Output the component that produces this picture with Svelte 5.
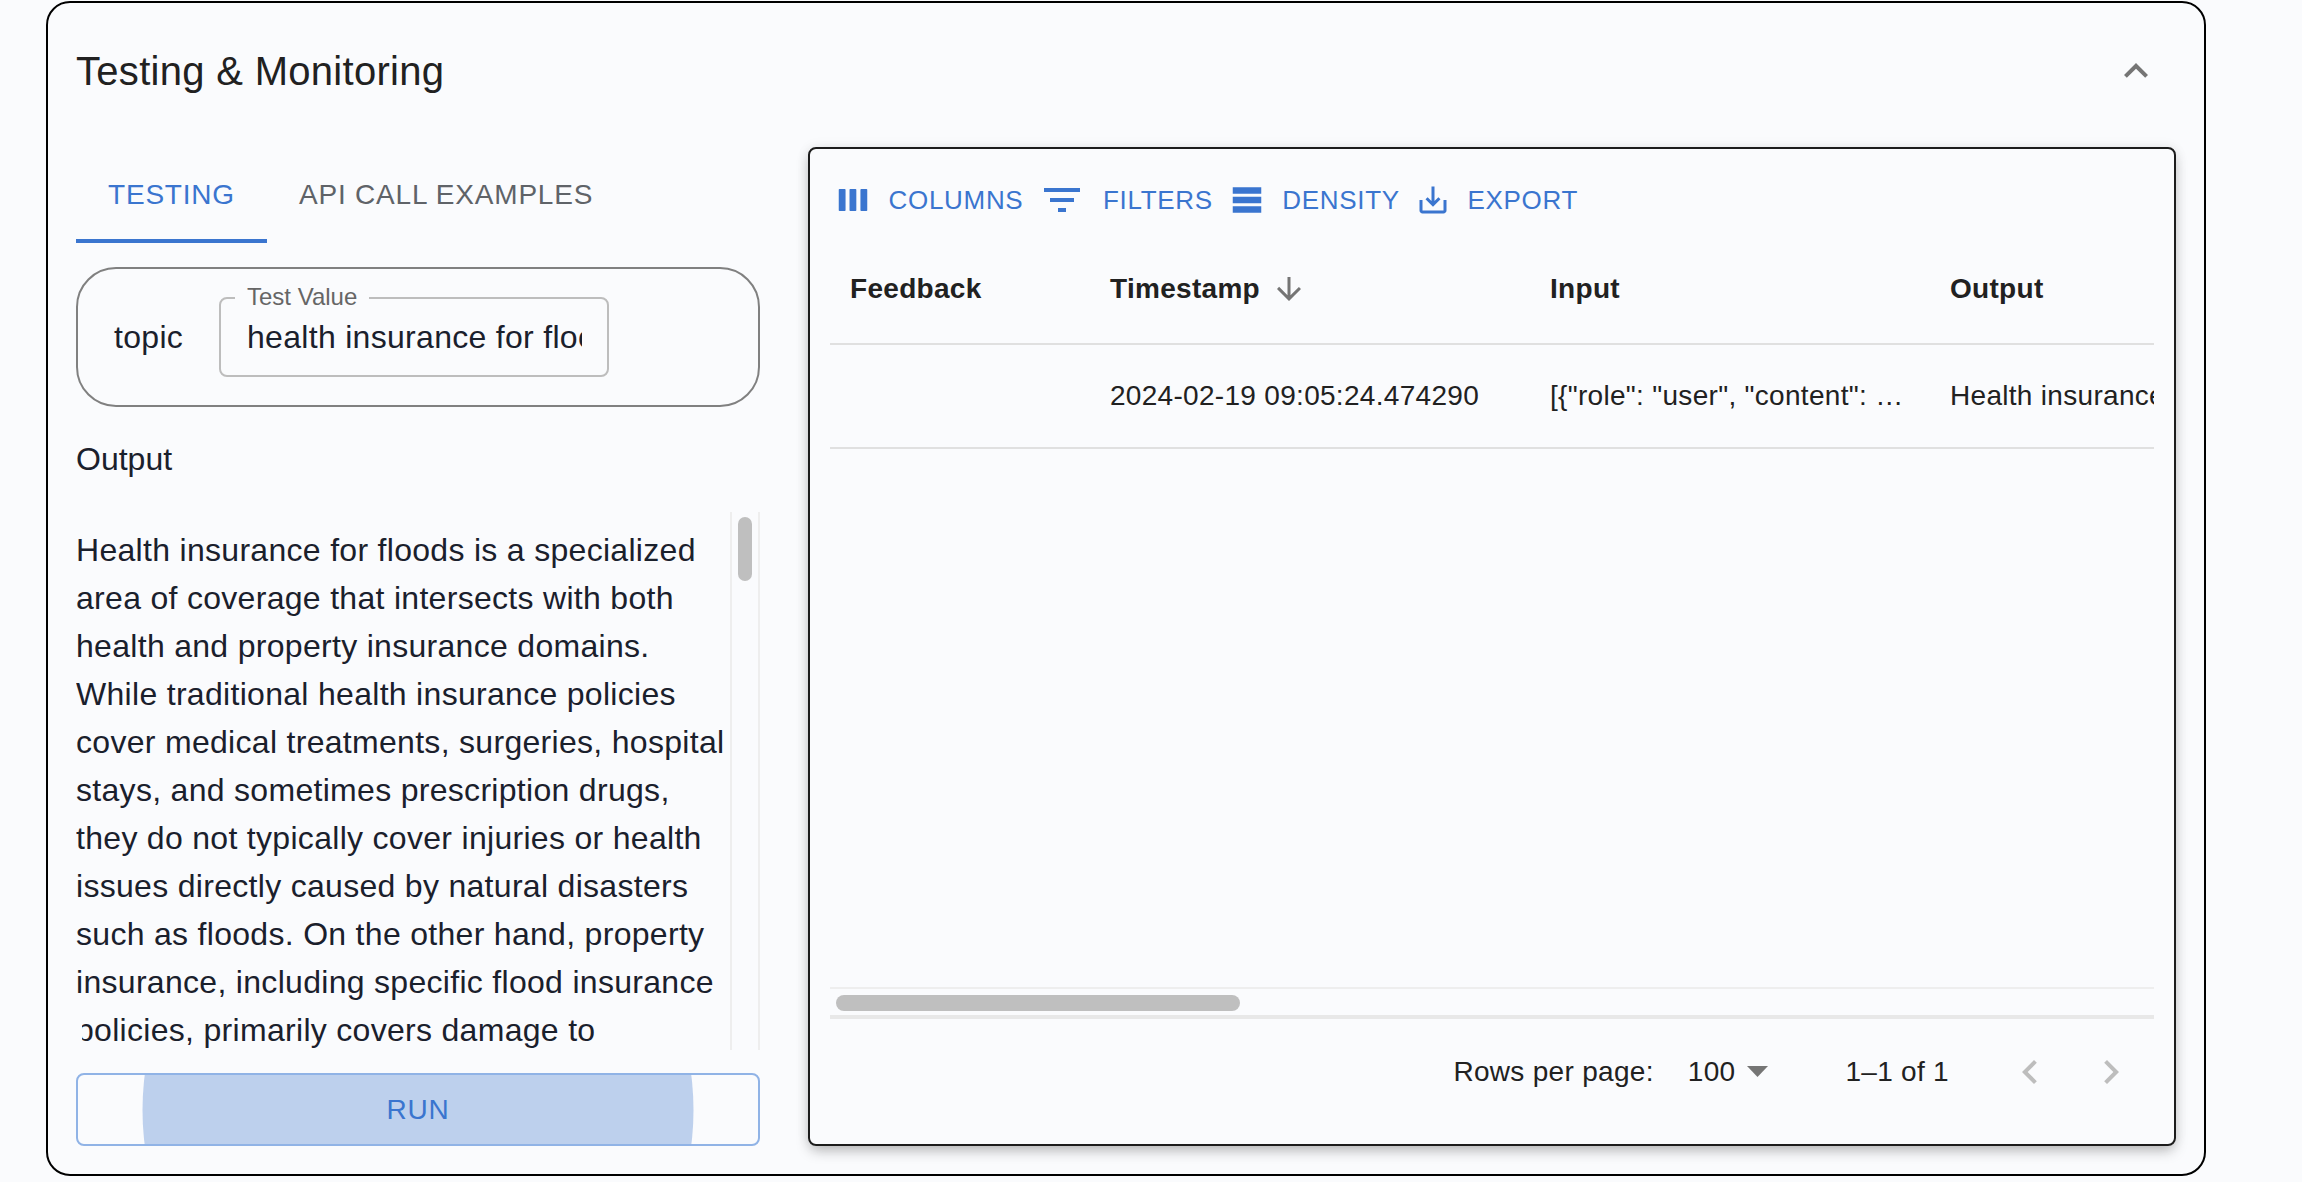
<script>
  const lines = [
    "Health insurance for floods is a specialized",
    "area of coverage that intersects with both",
    "health and property insurance domains.",
    "While traditional health insurance policies",
    "cover medical treatments, surgeries, hospital",
    "stays, and sometimes prescription drugs,",
    "they do not typically cover injuries or health",
    "issues directly caused by natural disasters",
    "such as floods. On the other hand, property",
    "insurance, including specific flood insurance",
    "policies, primarily covers damage to",
    "property and belongings caused by flood"
  ];

  const tools = [
    { label: "COLUMNS", size: 38, d: "M3.5 5h3.3a.5.5 0 0 1 .5.5v13a.5.5 0 0 1-.5.5H3.5a.5.5 0 0 1-.5-.5v-13a.5.5 0 0 1 .5-.5zM10.3 5h3.3a.5.5 0 0 1 .5.5v13a.5.5 0 0 1-.5.5h-3.3a.5.5 0 0 1-.5-.5v-13a.5.5 0 0 1 .5-.5zM17.2 5h3.3a.5.5 0 0 1 .5.5v13a.5.5 0 0 1-.5.5h-3.3a.5.5 0 0 1-.5-.5v-13a.5.5 0 0 1 .5-.5z" },
    { label: "FILTERS", size: 48, d: "M10 18h4v-2h-4v2zM3 6v2h18V6H3zm3 7h12v-2H6v2z" },
    { label: "DENSITY", size: 38, d: "M21 8H3V4h18v4zm0 2H3v4h18v-4zm0 6H3v4h18v-4z" },
    { label: "EXPORT", size: 36, d: "M19 12v7H5v-7H3v7c0 1.1.9 2 2 2h14c1.1 0 2-.9 2-2v-7h-2zm-6 .67l2.59-2.58L17 11.5l-5 5-5-5 1.41-1.41L11 12.67V3h2z" }
  ];
</script>

<div class="page">
  <section class="card">
    <header class="card-head">
      <h2>Testing &amp; Monitoring</h2>
      <svg class="collapse" viewBox="0 0 24 24" width="48" height="48"><path d="M12 8l-6 6 1.41 1.41L12 10.83l4.59 4.58L18 14z" /></svg>
    </header>

    <div class="columns">
      <div class="left">
        <div class="tabs">
          <div class="tab active">TESTING</div>
          <div class="tab">API CALL EXAMPLES</div>
        </div>

        <div class="vars">
          <span class="var-name">topic</span>
          <div class="field">
            <span class="legend">Test Value</span>
            <div class="field-value">health insurance for floods</div>
          </div>
        </div>

        <div class="output-label">Output</div>

        <div class="output">
          <div class="output-text">
            {#each lines as line}
              <div class="line">{line}</div>
            {/each}
          </div>
          <div class="mask"></div>
          <div class="vtrack"><div class="vthumb"></div></div>
        </div>

        <button class="run">
          <span class="ripple"></span>
          <span class="run-label">RUN</span>
        </button>
      </div>

      <div class="panel">
        <div class="toolbar">
          {#each tools as t}
            <div class="tool">
              <svg viewBox="0 0 24 24" width={t.size} height={t.size}><path d={t.d} /></svg>
              <span>{t.label}</span>
            </div>
          {/each}
        </div>

        <div class="grid-body">
          <div class="row head">
            <div class="cell">Feedback</div>
            <div class="cell">Timestamp
              <svg class="sort" viewBox="0 0 24 24" width="36" height="36"><path d="M20 12l-1.41-1.41L13 16.17V4h-2v12.17l-5.58-5.59L4 12l8 8 8-8z" /></svg>
            </div>
            <div class="cell">Input</div>
            <div class="cell">Output</div>
          </div>
          <div class="row data">
            <div class="cell"></div>
            <div class="cell">2024-02-19 09:05:24.474290</div>
            <div class="cell">[&#123;"role": "user", "content": …</div>
            <div class="cell">Health insurance for floods is a specialized</div>
          </div>
        </div>

        <div class="hscroll"><div class="hthumb"></div></div>

        <div class="pager">
          <span class="rows-label">Rows per page:</span>
          <span class="rows-value">100</span>
          <svg class="caret" viewBox="0 0 21 11" width="21" height="11"><path d="M0 0h21L10.5 11z" /></svg>
          <span class="range">1–1 of 1</span>
          <svg class="nav" viewBox="0 0 24 24" width="48" height="48"><path d="M15.41 16.59L10.83 12l4.58-4.59L14 6l-6 6 6 6 1.41-1.41z" /></svg>
          <svg class="nav next" viewBox="0 0 24 24" width="48" height="48"><path d="M8.59 16.59L13.17 12 8.59 7.41 10 6l6 6-6 6-1.41-1.41z" /></svg>
        </div>
      </div>
    </div>
  </section>
</div>

<style>
  :global(body) {
    margin: 0;
    background: #fafbfd;
    font-family: "Liberation Sans", Arial, sans-serif;
  }
  .page {
    height: 1182px;
    padding: 1px 0 0 46px;
    box-sizing: border-box;
    overflow: hidden;
  }
  .card {
    width: 2160px;
    height: 1175px;
    box-sizing: border-box;
    border: 2px solid #000;
    border-radius: 24px;
    padding: 0 28px 0 28px;
    background: #fafbfd;
  }
  .card-head {
    display: flex;
    align-items: center;
    justify-content: space-between;
    height: 144px;
    padding-bottom: 8px;
    box-sizing: border-box;
  }
  h2 {
    margin: 0;
    font-size: 40px;
    font-weight: 400;
    letter-spacing: 0.3px;
    color: #212121;
  }
  .collapse {
    fill: #757575;
    margin-right: 16px;
  }
  .columns {
    display: flex;
    gap: 48px;
  }
  .left {
    width: 684px;
    flex: none;
    display: flex;
    flex-direction: column;
  }
  .tabs {
    display: flex;
    height: 96px;
  }
  .tab {
    padding: 0 32px;
    font-size: 28px;
    line-height: 96px;
    letter-spacing: 0.8px;
    color: #5f6368;
    box-sizing: border-box;
  }
  .tab.active {
    color: #3a75cf;
    border-bottom: 4px solid #3a75cf;
  }
  .vars {
    margin-top: 24px;
    height: 140px;
    box-sizing: border-box;
    border: 2px solid #808080;
    border-radius: 40px;
    display: flex;
    align-items: center;
    padding-left: 36px;
    color: #1a202c;
    font-size: 32px;
  }
  .var-name {
    width: 105px;
    letter-spacing: 0.3px;
  }
  .field {
    position: relative;
    width: 390px;
    height: 80px;
    box-sizing: border-box;
    border: 2px solid #bdbdbd;
    border-radius: 8px;
    padding: 0 25px 0 26px;
    display: flex;
    align-items: center;
  }
  .legend {
    position: absolute;
    left: 14px;
    top: -16px;
    padding: 0 12px;
    background: #fafbfd;
    font-size: 24px;
    line-height: 28px;
    color: #666;
  }
  .field-value {
    flex: 1;
    white-space: nowrap;
    overflow: hidden;
    letter-spacing: 0.3px;
  }
  .output-label {
    margin-top: 28px;
    font-size: 32px;
    line-height: 48px;
    color: #1a202c;
  }
  .output {
    position: relative;
    margin-top: 29px;
    height: 538px;
    display: flex;
    overflow: hidden;
  }
  .output-text {
    flex: 1;
    padding-top: 14px;
    font-size: 32px;
    line-height: 48px;
    letter-spacing: 0.3px;
    color: #1a202c;
    white-space: nowrap;
    overflow: hidden;
  }
  .mask {
    position: absolute;
    left: 0;
    top: 508px;
    width: 6px;
    height: 30px;
    background: #fafbfd;
  }
  .vtrack {
    width: 30px;
    flex: none;
    box-sizing: border-box;
    border-left: 2px solid #eee;
    border-right: 2px solid #eee;
    padding: 5px 6px 0;
  }
  .vthumb {
    height: 64px;
    border-radius: 8px;
    background: #bfbfbf;
  }
  .run {
    position: relative;
    margin-top: 23px;
    height: 73px;
    padding: 0;
    font: inherit;
    box-sizing: border-box;
    border: 2px solid #90b3e6;
    border-radius: 8px;
    background: transparent;
    overflow: hidden;
    display: flex;
    align-items: center;
    justify-content: center;
  }
  .ripple {
    position: absolute;
    left: 50%;
    top: 50%;
    width: 551px;
    height: 551px;
    transform: translate(-50%, -50%);
    border-radius: 50%;
    background: #bdd0ed;
  }
  .run-label {
    position: relative;
    font-size: 28px;
    letter-spacing: 0.8px;
    color: #3a75cf;
  }
  .panel {
    width: 1368px;
    height: 999px;
    box-sizing: border-box;
    border: 2px solid #1c1c1c;
    border-radius: 8px;
    padding: 0 20px;
    display: flex;
    flex-direction: column;
    box-shadow: 0 6px 14px -2px rgba(0, 0, 0, 0.28), 0 0 14px rgba(0, 0, 0, 0.06);
  }
  .toolbar {
    display: flex;
    align-items: center;
    gap: 15px;
    height: 88px;
    padding: 14px 0 0 4px;
    box-sizing: border-box;
  }
  .tool {
    display: flex;
    align-items: center;
    gap: 16.5px;
    color: #3a75cf;
    font-size: 26px;
    letter-spacing: 0.7px;
  }
  .tool svg {
    fill: #3a75cf;
  }
  .grid-body {
    flex: 1;
    overflow: hidden;
  }
  .row {
    display: grid;
    grid-template-columns: 260px 440px 400px 224px;
    border-bottom: 2px solid #e0e0e0;
    box-sizing: border-box;
    font-size: 28px;
    color: #212121;
  }
  .row.head {
    height: 108px;
    padding-bottom: 2px;
    font-weight: 700;
    letter-spacing: 0.3px;
  }
  .row.data {
    height: 104px;
    letter-spacing: 0.3px;
  }
  .cell {
    display: flex;
    align-items: center;
    gap: 11px;
    padding-left: 20px;
    white-space: nowrap;
    overflow: hidden;
  }
  .sort {
    fill: #757575;
  }
  .hscroll {
    height: 32px;
    box-sizing: border-box;
    border-top: 2px solid #eee;
    border-bottom: 4px solid #e8e8e8;
    padding: 6px 0 0 6px;
  }
  .hthumb {
    width: 404px;
    height: 16px;
    border-radius: 8px;
    background: #bfbfbf;
  }
  .pager {
    height: 125px;
    padding: 0 19px 20px 0;
    box-sizing: border-box;
    display: flex;
    align-items: center;
    justify-content: flex-end;
    font-size: 28px;
    color: #212121;
    letter-spacing: 0.3px;
  }
  .rows-value {
    margin-left: 34px;
  }
  .caret {
    fill: #757575;
    margin-left: 12px;
  }
  .range {
    margin-left: 77px;
  }
  .nav {
    fill: #bdbdbd;
    margin-left: 57px;
  }
  .nav.next {
    margin-left: 33px;
  }
</style>
